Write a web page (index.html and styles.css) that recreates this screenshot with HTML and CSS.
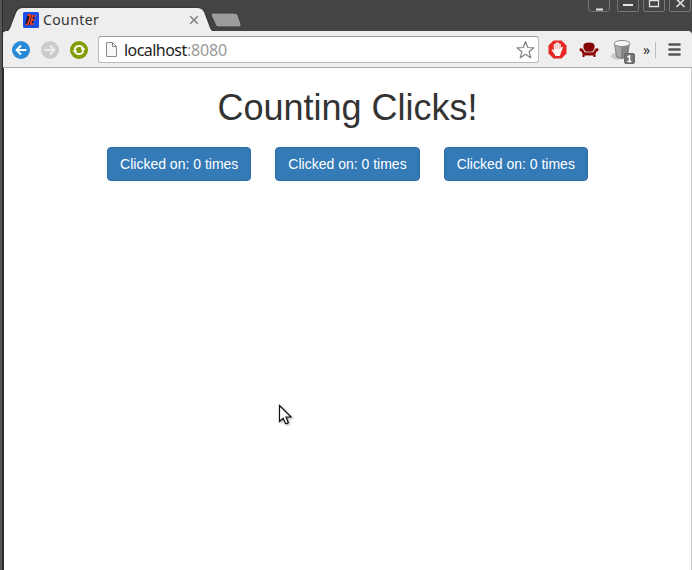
FILE: index.html
```html
<!DOCTYPE html>
<html lang="en">
<head>
<meta charset="utf-8">
<title>Counter</title>
<link rel="stylesheet" href="styles.css">
</head>
<body>
<div class="window">
  <header class="titlebar">
    <div class="tab">
      <svg class="tab-shape" width="212" height="26" viewBox="0 0 212 26"><path d="M0 26V25C5 25 6 24 8 19L13 6Q15 1 20 1H194Q199 1 201 5L207 21Q209 25 212 25V26Z" fill="#eee"/></svg>
      <svg class="favicon" width="16" height="16" viewBox="0 0 16 16"><rect width="16" height="16" rx="1.5" fill="#1c50ec"/><path d="M6.500 2.500 4 13M10 3 7.500 13" fill="none" stroke="#10142c" stroke-width="4"/><path d="M4.500 3.200h3L5 12.500H2.800M9.500 4h3.800M8.500 8h3.500M7.500 12h3.500M9.800 3 7.500 13" fill="none" stroke="#f04126" stroke-width="1.700"/></svg>
      <span class="tab-title">Counter</span>
      <svg class="tab-close" width="10" height="10" viewBox="0 0 10 10"><path d="m1.200 1.200 7.600 7.600M8.800 1.200 1.200 8.800" stroke="#858585" stroke-width="1.600"/></svg>
    </div>
    <svg class="new-tab" width="32" height="16" viewBox="0 0 32 16"><path d="M3 1H24Q27 1 28 3L31 12Q32 15 29 15H8Q6 15 5 12L1 3Q0 1 3 1Z" fill="#9b9b9b" stroke="#353535"/></svg>
    <div class="controls">
      <svg width="104" height="12" viewBox="0 0 104 12"><g fill="#444" stroke="#777"><path d="M.5-2V8q0 3.500 3 3.500h15q3 0 3-3.500V-2M29.500-2V10q0 1.500 1.500 1.500h18q1.500 0 1.500-1.500V-2M55.500-2V10q0 1.500 1.500 1.500h18q1.500 0 1.500-1.500V-2M81.500-2V10q0 1.500 1.500 1.500h18q1.500 0 1.500-1.500V-2"/></g><path d="M8 9.500h7M35 5h10" stroke="#e6e6e6" stroke-width="2"/><path d="M61.500 0v6.500h9V0M61 .5h10" fill="none" stroke="#ddd" stroke-width="1.300"/><path d="m88.500-1 8 8m0-8-8 8" stroke="#ddd" stroke-width="1.700"/></svg>
    </div>
  </header>
  <nav class="toolbar">
    <svg class="nav-icon" width="18" height="18" viewBox="0 0 18 18"><circle cx="9" cy="9" r="9" fill="#298bd8"/><path d="M14.500 9H4.500M9 4.500 4.500 9 9 13.500" fill="none" stroke="#fff" stroke-width="1.900"/></svg>
    <svg class="nav-icon" width="18" height="18" viewBox="0 0 18 18"><circle cx="9" cy="9" r="9" fill="#cbcbcb"/><path d="M3.500 9h10M9 4.500 13.500 9 9 13.500" fill="none" stroke="#eee" stroke-width="1.900"/></svg>
    <svg class="nav-icon" width="18" height="18" viewBox="0 0 18 18"><circle cx="9" cy="9" r="9" fill="#839d00"/><path d="M4.700 8a4.500 4.500 0 0 1 8.600 0M13.300 10a4.500 4.500 0 0 1-8.600 0" fill="none" stroke="#fff" stroke-width="1.800"/><path d="M10.500 7.500h5l-2.500 3ZM7.500 10.500h-5l2.500-3Z" fill="#fff"/></svg>
    <div class="address">
      <svg width="13" height="16" viewBox="0 0 13 16"><path d="M1.500.5h6l4 4v10h-10Z" fill="#f8f8f8" stroke="#8b8b8b"/><path d="M7.500.5v4h4" fill="none" stroke="#8b8b8b"/></svg>
      <span class="url"><span class="host">localhost</span><span class="port">:8080</span></span>
      <svg width="20" height="20" viewBox="0 0 20 20"><path d="m9.500 1.500 2.300 6 6.200.3-4.900 4 1.700 6-5.300-3.500-5.300 3.500 1.700-6-4.900-4 6.200-.3Z" fill="#fff" stroke="#808080" stroke-width="1.200" stroke-linejoin="round"/></svg>
    </div>
    <svg class="ext-block" width="19" height="19" viewBox="0 0 19 19"><path d="M5.500.5h8l5 5v8l-5 5h-8l-5-5v-8Z" fill="#e42823"/><path d="m4.300 9.200 1.500 1.400V4.500q.9-1.300 1.600 0V3.200q.9-1.300 1.800 0v-.4q.9-1.200 1.800.2v1q.9-1.200 1.700.1v3.700l1.500-1q1 0 .6 1.200L13 12.500q-.5 2-1.200 3.500H7.500q-1-2-3.700-5.500-.5-1 .5-1.300Z" fill="#faf6f3"/><path d="M7.500 4v5M9.300 3.500V9M11.100 4v5" stroke="#e48882" stroke-width=".6"/></svg>
    <svg class="ext-chair" width="20" height="16" viewBox="0 0 20 16"><path d="M4.500 6V3Q5 .5 10 .5t5.500 2.500v3l-2 4h-7Z" fill="#850606"/><path d="M3 6.500Q0 5.500.5 8q.5 1.500 2 1.500L4 13.500h12l1.500-4q2 0 2-1.500.5-2.500-2.500-1.500-2 .2-2.500 3.500h-9Q5 6.500 3 6.500Z" fill="#900808"/><path d="M3.500 7q2 1 2.500 3h8q.5-2 2.500-3" fill="none" stroke="#eee" stroke-width=".7"/><path d="M3.500 13h2v2h-2zM14.500 13h2v2h-2z" fill="#700808"/></svg>
    <svg class="ext-bucket" width="25" height="26" viewBox="0 0 25 26"><ellipse cx="7" cy="17" rx="7" ry="3.500" fill="#c9c9c9"/><path d="m3 4 2 14q6 4 12 0l2-14Z" fill="#858585"/><path d="m4 6 2 11 4 2V7Z" fill="#a8a8a8"/><ellipse cx="11" cy="4.500" rx="8" ry="3" fill="#f5f5f5" stroke="#888"/><rect x="13.500" y="14.500" width="10" height="10" rx="1.500" fill="#757575" stroke="#666"/><path d="m16.500 18 2-1v5.500m-2 0h4" fill="none" stroke="#fff" stroke-width="1.500"/></svg>
    <span class="more">»</span>
    <span class="divider"></span>
    <svg class="menu" width="13" height="13" viewBox="0 0 13 13"><path d="M1.500 1.500h10M1.500 6.500h10M1.500 11.500h10" stroke="#555" stroke-width="2.600" stroke-linecap="round"/></svg>
  </nav>
  <main class="page">
    <h1>Counting Clicks!</h1>
    <div class="buttons">
      <button type="button">Clicked on: 0 times</button>
      <button type="button">Clicked on: 0 times</button>
      <button type="button">Clicked on: 0 times</button>
    </div>
  </main>
</div>
<svg class="cursor" width="15" height="23" viewBox="0 0 15 23"><path d="M1.500 1.500v16l3.600-3.300 2.500 5.300q1.200.7 2.700-1L8 13h5Z" fill="#fff" stroke="#111" stroke-width="1.200"/></svg>
</body>
</html>
```
FILE: styles.css
```css
* { box-sizing: border-box; }
body { margin: 0; overflow: hidden; background: #444; }
svg { display: block; flex: none; }
.window { height: 570px; display: flex; flex-direction: column; padding-left: 3px; background: linear-gradient(90deg, #555 0, #555 2px, #2d2d2d 2px, #2d2d2d 4px, #444 4px); }
.titlebar { height: 31px; display: flex; align-items: flex-start; background: #444; }
.tab { position: relative; width: 206px; height: 26px; margin-top: 7px; padding-left: 20px; display: flex; align-items: center; }
.tab-shape { position: absolute; left: 0; top: 0; z-index: 0; filter: drop-shadow(0 0 1px #222); }
.favicon, .tab-title, .tab-close { position: relative; }
.tab-title { width: 146px; margin-left: 4px; font: 14px/20px "Noto Sans", sans-serif; letter-spacing: .4px; color: #333; }
.new-tab { margin: 12px 0 0 1px; }
.controls { margin: 0 0 0 auto; }
.toolbar { height: 37px; display: flex; align-items: center; background: #eee; border-top: 1px solid #eee; border-bottom: 1px solid #aaa; border-radius: 4px 4px 0 0; padding-left: 9px; position: relative; }
.nav-icon { margin-right: 11px; }
.address { width: 441px; height: 27px; margin-left: -1px; display: flex; align-items: center; background: #fff; border: 1px solid #bbb; border-top-color: #999; border-radius: 3px; padding: 0 2px 0 6px; }
.url { flex: 1; margin-left: 6px; font: 16px/24px "Noto Sans", sans-serif; color: #999; }
.host { display: inline-block; width: 63px; letter-spacing: -.55px; color: #222; }
.port { letter-spacing: -.2px; }
.ext-block { margin-left: 9px; }
.ext-chair { margin-left: 12px; }
.ext-bucket { margin-left: 12px; margin-top: 4px; }
.more { width: 9px; margin-left: 7px; font: 14px/18px "Noto Sans", sans-serif; color: #333; }
.divider { width: 1px; height: 16px; margin-left: 3px; background: #bbb; }
.menu { margin-left: 12px; }
.page { flex: 1; margin-left: 1px; background: #fff; border-right: 1px solid #ccc; font-family: "Liberation Sans", Arial, sans-serif; }
h1 { margin: 20px 0 19px; text-align: center; font-size: 36px; line-height: 40px; font-weight: 500; color: #333; }
.buttons { display: flex; justify-content: center; gap: 24px; }
button { height: 34px; padding: 6px 12px; border: 1px solid #2e6da4; border-radius: 4px; background: #337ab7; color: #fff; font: 14px/20px "Liberation Sans", Arial, sans-serif; white-space: nowrap; }
.cursor { position: absolute; left: 278px; top: 404px; filter: drop-shadow(1px 1px 1px #aaa); }
```
